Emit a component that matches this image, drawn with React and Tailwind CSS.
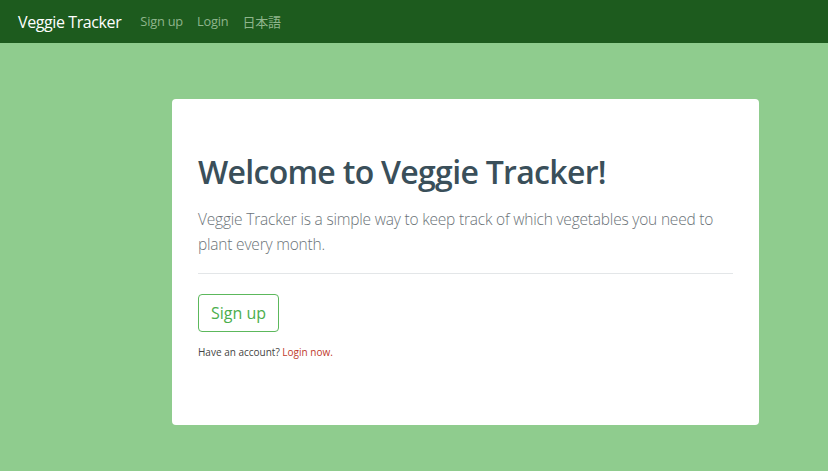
export default function App() {
  return (
    <div className="min-h-[471px] bg-[#8fcc8e]" style={{ fontFamily: '"Open Sans", "Noto Sans", "Noto Sans CJK JP", sans-serif' }}>
      <nav className="h-[43px] bg-[#1d5b1e] flex items-center pl-[18px]">
        <span className="text-white text-[16px] tracking-[-0.4px] mr-[19px]">Veggie Tracker</span>
        <div className="flex items-center gap-[14px] text-[12.8px] tracking-[-0.2px] text-[#8fb58c]">
          <span>Sign up</span>
          <span>Login</span>
          <span className="text-[13px]" style={{ fontFamily: '"Noto Sans CJK JP", sans-serif' }}>日本語</span>
        </div>
      </nav>
      <div className="pt-[56px] pl-[172px]">
        <div className="w-[587px] h-[326px] bg-white rounded-[4px] px-[26px] pt-[51px]">
          <h1 className="text-[32px] font-semibold text-[#3a4f5a] tracking-[-0.7px] leading-[44px]">Welcome to Veggie Tracker!</h1>
          <p className="mt-[13px] text-[15.5px] font-light text-[#6b7378] leading-[25px] tracking-[-0.2px] w-[536px]">
            Veggie Tracker is a simple way to keep track of which vegetables you need to plant every month.
          </p>
          <div className="mt-[16px] h-px bg-[#e3e6e8] w-[535px]" />
          <button className="mt-[20px] h-[38px] px-[12px] border border-[#5cb85c] rounded-[4px] text-[#4cae4c] text-[16px] leading-none">Sign up</button>
          <p className="mt-[13px] text-[10px] text-[#444]">
            Have an account? <span className="text-[#c0392b]">Login now.</span>
          </p>
        </div>
      </div>
    </div>
  );
}
